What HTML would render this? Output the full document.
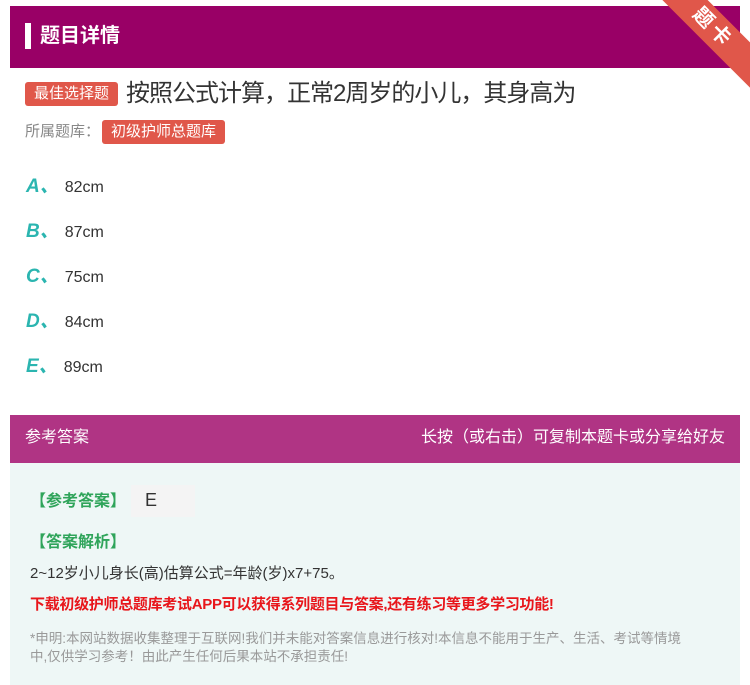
<!DOCTYPE html>
<html><head><meta charset="utf-8"><style>
*{margin:0;padding:0;box-sizing:border-box}
body{width:750px;height:685px;background:#fff;font-family:"Liberation Sans","Noto Sans CJK SC",sans-serif;position:relative;overflow:hidden}
.hdr{position:absolute;left:10px;top:6px;width:730px;height:62px;background:#990066}
.hdr .bar{position:absolute;left:15px;top:17px;width:6px;height:26px;background:#fff}
.hdr .t{position:absolute;left:30px;top:16px;color:#fff;font-size:20px;font-weight:bold;line-height:28px}
.rib{position:absolute;right:-38px;top:12px;width:150px;height:32px;background:#e0574a;transform:rotate(45deg);color:#fff;font-size:20px;font-weight:bold;text-align:center;line-height:32px;letter-spacing:4px}
.tag{display:inline-block;background:#e0574a;color:#fff;border-radius:3px}
.q{position:absolute;left:25px;top:78px;font-size:24px;color:#333;line-height:32px;letter-spacing:-1px}
.q .tag{font-size:15px;padding:0 9px;line-height:24px;vertical-align:3px;margin-right:8px;letter-spacing:0}
.lib{position:absolute;left:25px;top:120px;font-size:15px;color:#888;line-height:24px}
.lib .tag{font-size:15px;padding:0 9px;line-height:24px;margin-left:2px}
.opt{position:absolute;left:26px;font-size:16px;color:#333;line-height:24px}
.opt b{color:#2bb5b0;font-style:italic;font-size:19px;margin-right:6px}
.ab{position:absolute;left:10px;top:415px;width:730px;height:48px;background:#b03484;color:#fff;font-size:16px;line-height:46px;padding:0 15px}
.ab span{float:right}
.ans{position:absolute;left:10px;top:463px;width:730px;height:222px;background:#eef7f6}
.g{position:absolute;left:30px;color:#2fa45a;font-size:16px;font-weight:bold}
.e{position:absolute;left:131px;top:485px;width:64px;height:32px;background:#f4f4f4;font-size:18px;line-height:30px;padding-left:14px;color:#333}
</style></head><body>
<div class="hdr"><div class="bar"></div><div class="t">题目详情</div></div>
<div class="rib">题卡</div>
<div class="q"><span class="tag">最佳选择题</span>按照公式计算，正常2周岁的小儿，其身高为</div>
<div class="lib">所属题库：<span class="tag">初级护师总题库</span></div>
<div class="opt" style="top:175px"><b>A、</b>82cm</div>
<div class="opt" style="top:220px"><b>B、</b>87cm</div>
<div class="opt" style="top:265px"><b>C、</b>75cm</div>
<div class="opt" style="top:310px"><b>D、</b>84cm</div>
<div class="opt" style="top:355px"><b>E、</b>89cm</div>
<div class="ab">参考答案<span>长按（或右击）可复制本题卡或分享给好友</span></div>
<div class="ans"></div>
<div class="g" style="top:487px">【参考答案】</div>
<div class="e">E</div>
<div class="g" style="top:528px">【答案解析】</div>
<div style="position:absolute;left:30px;top:562px;font-size:15px;color:#333">2~12岁小儿身长(高)估算公式=年龄(岁)x7+75。</div>
<div style="position:absolute;left:30px;top:593px;font-size:15px;color:#e8161b;font-weight:bold;letter-spacing:-0.3px">下载初级护师总题库考试APP可以获得系列题目与答案,还有练习等更多学习功能!</div>
<div style="position:absolute;left:30px;top:630px;width:676px;font-size:13.5px;color:#999;line-height:18px">*申明:本网站数据收集整理于互联网!我们并未能对答案信息进行核对!本信息不能用于生产、生活、考试等情境<br>中,仅供学习参考！由此产生任何后果本站不承担责任!</div>
</body></html>
